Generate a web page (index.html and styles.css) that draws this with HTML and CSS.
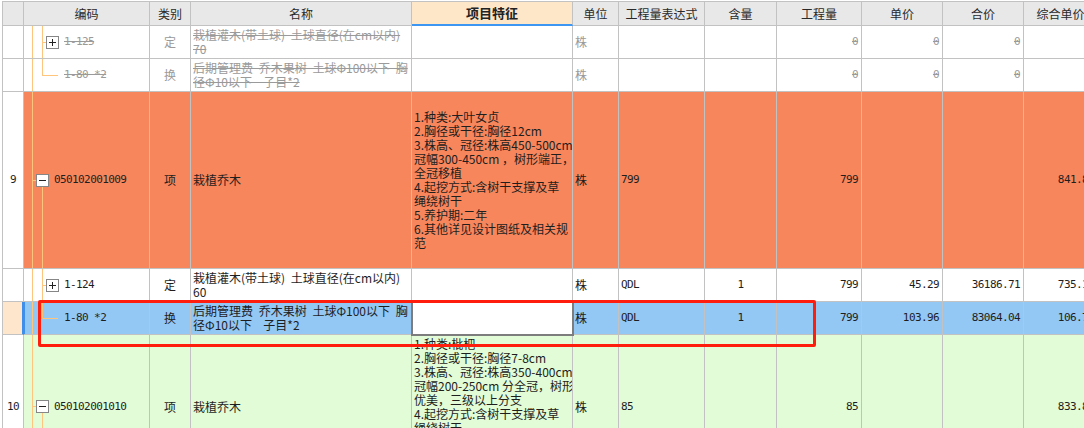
FILE: index.html
```html
<!DOCTYPE html>
<html lang="zh-CN">
<head>
<meta charset="utf-8">
<title>清单</title>
<link rel="stylesheet" href="styles.css">
</head>
<body>
<div class="sheet">
  <div class="row head">
    <div class="c"></div>
    <div class="c ctr">编码</div>
    <div class="c ctr">类别</div>
    <div class="c ctr">名称</div>
    <div class="c ctr feat-h">项目特征</div>
    <div class="c ctr">单位</div>
    <div class="c ctr">工程量表达式</div>
    <div class="c ctr">含量</div>
    <div class="c ctr">工程量</div>
    <div class="c ctr">单价</div>
    <div class="c ctr">合价</div>
    <div class="c ctr">综合单价</div>
  </div>

  <div class="row del">
    <div class="c n"></div>
    <div class="c code kid"><span class="cn"></span><span class="bx"><svg width="11" height="11" viewBox="0 0 11 11"><rect x="2" y="5" width="7" height="1"/><rect x="5" y="2" width="1" height="7"/></svg></span><span class="m s lbl">1-125</span></div>
    <div class="c ctr g">定</div>
    <div class="c s"><span>栽植灌木(带土球) 土球直径(在cm以内)<br>70</span></div>
    <div class="c"></div>
    <div class="c g">株</div>
    <div class="c"></div>
    <div class="c"></div>
    <div class="c rt"><span class="m s">0</span></div>
    <div class="c rt"><span class="m s">0</span></div>
    <div class="c rt"><span class="m s">0</span></div>
    <div class="c"></div>
  </div>

  <div class="row del">
    <div class="c n"></div>
    <div class="c code last"><span class="cn long"></span><span class="m s lbl2">1-80 *2</span></div>
    <div class="c ctr g">换</div>
    <div class="c s"><span>后期管理费 乔木果树 土球Φ100以下 胸<br>径Φ10以下  子目*2</span></div>
    <div class="c"></div>
    <div class="c g">株</div>
    <div class="c"></div>
    <div class="c"></div>
    <div class="c rt"><span class="m s">0</span></div>
    <div class="c rt"><span class="m s">0</span></div>
    <div class="c rt"><span class="m s">0</span></div>
    <div class="c"></div>
  </div>

  <div class="row r-or tall9">
    <div class="c n ctr"><span class="m">9</span></div>
    <div class="c code par"><span class="cn"></span><span class="bx"><svg width="11" height="11" viewBox="0 0 11 11"><rect x="2" y="5" width="7" height="1"/></svg></span><span class="m lbl">050102001009</span></div>
    <div class="c ctr">项</div>
    <div class="c">栽植乔木</div>
    <div class="c ft"><span>1.种类:大叶女贞<br>2.胸径或干径:胸径12cm<br>3.株高、冠径:株高450-500cm<br>冠幅300-450cm ，树形端正，<br>全冠移植<br>4.起挖方式:含树干支撑及草<br>绳绕树干<br>5.养护期:二年<br>6.其他详见设计图纸及相关规<br>范</span></div>
    <div class="c">株</div>
    <div class="c"><span class="m">799</span></div>
    <div class="c"></div>
    <div class="c rt"><span class="m">799</span></div>
    <div class="c"></div>
    <div class="c"></div>
    <div class="c rt"><span class="m">841.80</span></div>
  </div>

  <div class="row">
    <div class="c n"></div>
    <div class="c code kid"><span class="cn"></span><span class="bx"><svg width="11" height="11" viewBox="0 0 11 11"><rect x="2" y="5" width="7" height="1"/><rect x="5" y="2" width="1" height="7"/></svg></span><span class="m lbl">1-124</span></div>
    <div class="c ctr">定</div>
    <div class="c"><span>栽植灌木(带土球) 土球直径(在cm以内)<br>60</span></div>
    <div class="c"></div>
    <div class="c">株</div>
    <div class="c"><span class="m">QDL</span></div>
    <div class="c ctr"><span class="m">1</span></div>
    <div class="c rt"><span class="m">799</span></div>
    <div class="c rt"><span class="m">45.29</span></div>
    <div class="c rt"><span class="m">36186.71</span></div>
    <div class="c rt"><span class="m">735.14</span></div>
  </div>

  <div class="row r-sel">
    <div class="c n sel"></div>
    <div class="c code last cur"><span class="cn long"></span><span class="m lbl2">1-80 *2</span></div>
    <div class="c ctr">换</div>
    <div class="c"><span>后期管理费 乔木果树 土球Φ100以下 胸<br>径Φ10以下  子目*2</span></div>
    <div class="c edit"></div>
    <div class="c">株</div>
    <div class="c"><span class="m">QDL</span></div>
    <div class="c ctr"><span class="m">1</span></div>
    <div class="c rt"><span class="m">799</span></div>
    <div class="c rt"><span class="m">103.96</span></div>
    <div class="c rt"><span class="m">83064.04</span></div>
    <div class="c rt"><span class="m">106.73</span></div>
  </div>

  <div class="row r-gr tall10">
    <div class="c n ctr"><span class="m">10</span></div>
    <div class="c code par"><span class="cn"></span><span class="bx"><svg width="11" height="11" viewBox="0 0 11 11"><rect x="2" y="5" width="7" height="1"/></svg></span><span class="m lbl">050102001010</span></div>
    <div class="c ctr">项</div>
    <div class="c">栽植乔木</div>
    <div class="c ft"><span>1.种类:枇杷<br>2.胸径或干径:胸径7-8cm<br>3.株高、冠径:株高350-400cm<br>冠幅200-250cm 分全冠，树形<br>优美，三级以上分支<br>4.起挖方式:含树干支撑及草<br>绳绕树干<br>5.养护期:二年<br>6.其他详见设计图纸及相关规<br>范</span></div>
    <div class="c">株</div>
    <div class="c"><span class="m">85</span></div>
    <div class="c"></div>
    <div class="c rt"><span class="m">85</span></div>
    <div class="c"></div>
    <div class="c"></div>
    <div class="c rt"><span class="m">833.80</span></div>
  </div>
</div>
<div class="frame"></div>
</body>
</html>
```

FILE: styles.css
```css
html, body {
  margin: 0;
  padding: 0;
  background: #ffffff;
  overflow: hidden;
}
body {
  position: relative;
  width: 1084px;
  height: 428px;
  font-family: "Noto Sans CJK SC", "Noto Sans", sans-serif;
  font-size: 12px;
  color: #1e1e1e;
}
.sheet {
  margin: 1px 0 0 2px;
  width: 1096px;
  border-left: 1px solid #c2c2c2;
  border-top: 1px solid #c2c2c2;
}
.row {
  display: grid;
  grid-template-columns: 21px 126px 41px 221px 161px 46px 86px 72px 85px 81px 81px 74px;
  height: 33px;
  background: #ffffff;
}
.row.head { height: 24px; background: #e8e8e8; color: #2a2a2a; }
.row.tall9 { height: 177px; }
.row.tall10 { height: 144px; }
.r-or { background: #f7865c !important; }
.r-gr { background: #e1fcd6 !important; }
.r-sel { background: #93c7f4 !important; }

.c {
  box-sizing: border-box;
  border-right: 1px solid #c2c2c2;
  border-bottom: 1px solid #c2c2c2;
  display: flex;
  align-items: center;
  padding: 0 2px;
  line-height: 14px;
  word-spacing: 3px;
  white-space: pre;
  overflow: hidden;
}
.c.ft { word-spacing: 0; }
.ctr { justify-content: center; }
.rt { justify-content: flex-end; padding-right: 3px; }
.n { background: #ffffff; padding: 0; }
.n.sel { background: #fde6cb; border-right: 2px solid #3f8fea; }

.feat-h {
  background: #fee7c9;
  font-weight: bold;
  font-size: 13px;
  color: #222;
  border-bottom: 2px solid #3d96f2;
}

.m {
  font-family: "DejaVu Sans Mono", "Liberation Mono", monospace;
  font-size: 11px;
  letter-spacing: -0.6px;
  word-spacing: 0;
}
.del { color: #9a9a9a; }
.s { text-decoration: line-through; color: #9a9a9a; }
.g { color: #9a9a9a; }

/* tree column */
.code {
  --tc: #ffc57c;
  padding: 0 0 0 8px;
  background: linear-gradient(var(--tc), var(--tc)) 8px 0 / 1px 100% no-repeat;
}
.code.kid {
  padding-left: 18px;
  background:
    linear-gradient(var(--tc), var(--tc)) 8px 0 / 1px 100% no-repeat,
    linear-gradient(var(--tc), var(--tc)) 18px 0 / 1px 100% no-repeat;
}
.code.last {
  padding-left: 18px;
  background:
    linear-gradient(var(--tc), var(--tc)) 8px 0 / 1px 100% no-repeat,
    linear-gradient(var(--tc), var(--tc)) 18px 0 / 1px 50% no-repeat;
}
.code.par {
  background:
    linear-gradient(var(--tc), var(--tc)) 8px 0 / 1px 100% no-repeat,
    linear-gradient(var(--tc), var(--tc)) 18px 100% / 1px 50% no-repeat;
}
.code.cur { box-shadow: inset 1px 0 0 #3f8fea; }
.cn {
  flex: none;
  width: 4px;
  height: 1px;
  background: var(--tc);
}
.cn.long { width: 16px; }
.bx {
  flex: none;
  box-sizing: border-box;
  width: 13px;
  height: 13px;
  border: 1px solid #868686;
  background: #ffffff;
  display: flex;
}
.bx svg { display: block; fill: #222; }
.lbl { margin-left: 5px; }
.lbl2 { margin-left: 6px; }

.edit {
  background: #ffffff;
  outline: 2px solid #7d7d7d;
  outline-offset: -1px;
  position: relative;
  z-index: 1;
}

.frame {
  position: absolute;
  left: 38px;
  top: 300px;
  width: 778px;
  height: 47px;
  box-sizing: border-box;
  border: 3px solid #ff1e0e;
  border-radius: 2px;
  z-index: 2;
}
```
